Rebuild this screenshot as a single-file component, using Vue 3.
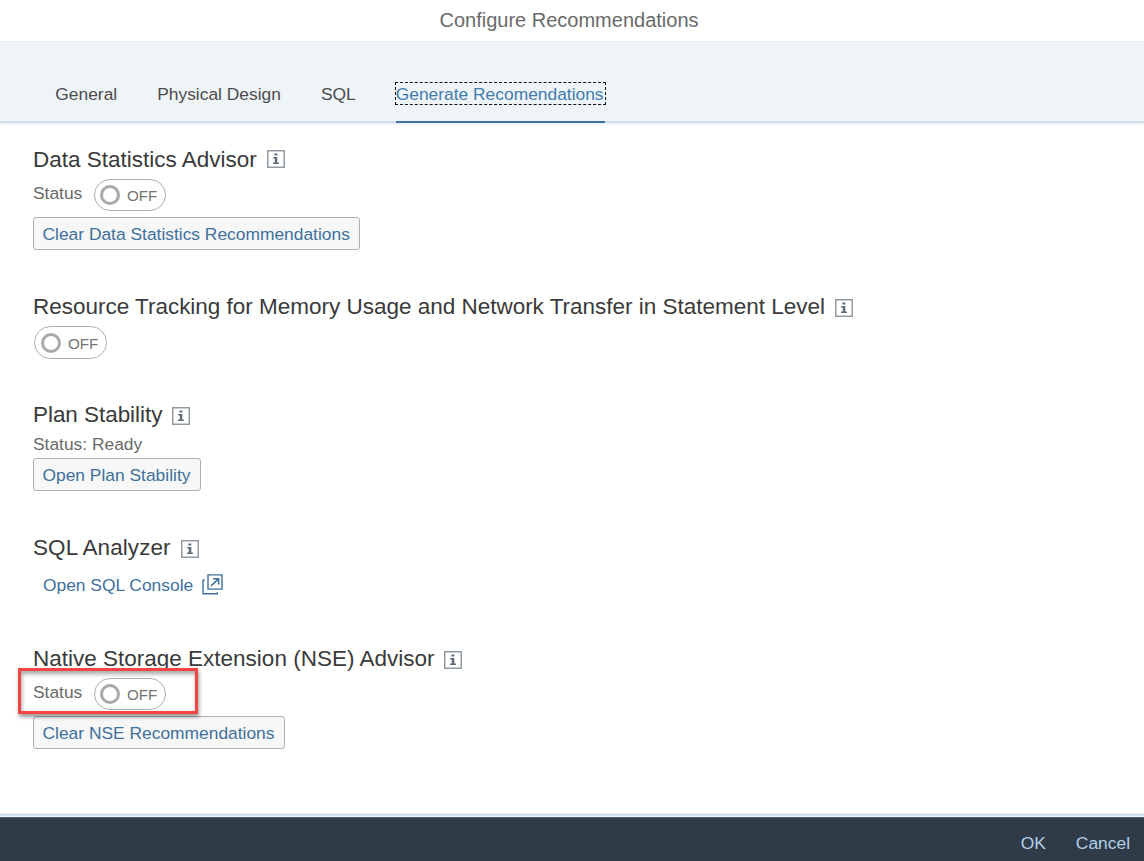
<script setup>
const tabs = [
  { label: 'General' },
  { label: 'Physical Design' },
  { label: 'SQL' },
  { label: 'Generate Recomendations', active: true },
]

const sections = [
  { id: 'stats', title: 'Data Statistics Advisor', label: 'Status', toggle: true, button: 'Clear Data Statistics Recommendations' },
  { id: 'tracking', title: 'Resource Tracking for Memory Usage and Network Transfer in Statement Level', toggle: true },
  { id: 'plan', title: 'Plan Stability', text: 'Status: Ready', button: 'Open Plan Stability' },
  { id: 'sql', title: 'SQL Analyzer', link: 'Open SQL Console' },
  { id: 'nse', title: 'Native Storage Extension (NSE) Advisor', label: 'Status', toggle: true, button: 'Clear NSE Recommendations', marked: true },
]
</script>

<template>
  <div class="dialog">
    <header class="title">Configure Recommendations</header>
    <nav class="tabs">
      <div v-for="t in tabs" :key="t.label" class="tab" :class="{ active: t.active }">
        <span class="tab-text">{{ t.label }}</span>
      </div>
    </nav>
    <main class="content">
      <section v-for="s in sections" :key="s.id" class="section" :class="s.id">
        <h2 class="heading">
          <span>{{ s.title }}</span>
          <svg class="info" viewBox="0 0 18 18" width="18" height="18">
            <rect x="0.75" y="0.75" width="16.5" height="16.5" fill="none" stroke="#8b959d" stroke-width="1.4" />
            <path d="M7.4 3.4h2.9v2.1H7.4zM6.2 6.9h4.1v5.6h1.6v1.6H6v-1.6h1.8V8.4H6.2z" fill="#5f6c77" />
          </svg>
        </h2>
        <div v-if="s.toggle" class="row">
          <span v-if="s.label" class="label">{{ s.label }}</span>
          <span class="switch"><span class="knob"></span><span class="off">OFF</span></span>
          <span v-if="s.marked" class="marker"></span>
        </div>
        <div v-if="s.text" class="status">{{ s.text }}</div>
        <button v-if="s.button" class="button">{{ s.button }}</button>
        <div v-if="s.link" class="link">
          <span>{{ s.link }}</span>
          <svg class="external" viewBox="0 0 21 21" width="21" height="21" fill="none" stroke="#40709c" stroke-width="1.4">
            <path d="M6 0.9h14v14.2H6z" />
            <path d="M3 6.1H1v13.7h14.3v-1.6" />
            <path d="M9 12l7.3-7.1M11 4.7h5.6v5.7" stroke-width="1.6" />
          </svg>
        </div>
      </section>
    </main>
    <footer class="footer">
      <span>OK</span>
      <span>Cancel</span>
    </footer>
  </div>
</template>

<style>
body {
  margin: 0;
  background: #fff;
}
</style>

<style scoped>
.dialog {
  width: 1144px;
  height: 861px;
  display: flex;
  flex-direction: column;
  overflow: hidden;
  background: #fff;
  font-family: "Liberation Sans", Arial, sans-serif;
  font-size: 17.4px;
  color: #6a6a6a;
}
.title {
  box-sizing: border-box;
  height: 42px;
  padding-right: 6px;
  text-align: center;
  font-size: 20px;
  line-height: 40px;
  border-bottom: 1px solid #eceff1;
}
.tabs {
  box-sizing: border-box;
  height: 81px;
  padding-left: 55.3px;
  display: flex;
  gap: 40px;
  background: #eff4f8;
  border-bottom: 2px solid #cfdfed;
  box-shadow: 0 1px 2px #e3ecf4;
  color: #4c4c4c;
}
.tab {
  box-sizing: border-box;
  height: 81px;
  padding-top: 41px;
  white-space: nowrap;
}
.tab-text {
  display: block;
  padding-top: 2px;
  line-height: 19px;
}
.tab.active {
  color: #427cac;
  border-bottom: 2px solid #40709c;
}
.tab.active .tab-text {
  padding-right: 1px;
  margin-right: -1px;
  outline: 1px dashed #111;
  outline-offset: 0;
}
.tab.active {
  padding-right: 1px;
}
.content {
  flex: 1;
  padding: 22px 33px 0 33px;
}
.section {
  display: flex;
  flex-direction: column;
  align-items: flex-start;
}
.heading {
  margin: 0;
  height: 28px;
  display: flex;
  gap: 10px;
  font-size: 22.5px;
  font-weight: 400;
  line-height: 30px;
  color: #3a3a3a;
  white-space: nowrap;
}
.info {
  margin-top: 7px;
}
.stats .info {
  margin-top: 5px;
}
.plan .info {
  margin-top: 6.5px;
}
.row {
  position: relative;
  display: flex;
  height: 32px;
  margin-top: 6px;
}
.label {
  line-height: 29px;
  width: 61px;
}
.switch {
  box-sizing: border-box;
  width: 72px;
  height: 32px;
  padding-left: 5px;
  display: flex;
  align-items: center;
  border: 1px solid #b0b0b0;
  border-radius: 16px;
}
.knob {
  box-sizing: border-box;
  width: 20px;
  height: 20px;
  border: 3px solid #a9a9a9;
  border-radius: 50%;
}
.off {
  margin-left: 7px;
  padding-top: 1px;
  font-size: 15.2px;
  color: #747474;
}
.button {
  box-sizing: border-box;
  height: 33px;
  margin: 6px 0 0;
  padding: 1px 9.5px 0 8.5px;
  font: inherit;
  color: #40709c;
  background: #f7f7f7;
  border: 1px solid #b0b0b0;
  border-radius: 3px;
  white-space: nowrap;
}
.tracking {
  margin-top: 42px;
}
.tracking .heading {
  letter-spacing: -0.013px;
}
.tracking .switch {
  width: 73px;
  height: 33px;
  margin-left: 1px;
  padding-left: 6px;
  border-radius: 17px;
}
.plan {
  margin-top: 42px;
}
.plan .heading {
  letter-spacing: -0.05px;
}
.status {
  margin-top: 4px;
  line-height: 24px;
}
.plan .button {
  margin-top: 2px;
}
.sql {
  margin-top: 42px;
}
.sql .heading {
  letter-spacing: 0.08px;
}
.link {
  display: flex;
  height: 24px;
  margin: 12px 0 0 10px;
  gap: 9px;
  line-height: 24px;
  color: #40709c;
}
.external {
  margin-top: 1px;
}
.nse {
  margin-top: 47px;
}
.marker {
  position: absolute;
  box-sizing: border-box;
  left: -15px;
  top: -10px;
  width: 180px;
  height: 46px;
  border: 3px solid #f44444;
  box-shadow: 1px 3px 4px rgba(0, 0, 0, 0.4), inset 1px 3px 4px rgba(0, 0, 0, 0.35);
}
.footer {
  box-sizing: border-box;
  height: 48px;
  padding: 4px 14px 0 0;
  display: flex;
  justify-content: flex-end;
  gap: 30px;
  line-height: 50px;
  color: #b3d0e8;
  border-top: 1px solid #e8eff6;
  background: linear-gradient(#cfdfed 2px, #f7fafc 2px, #f7fafc 3px, #52657a 3px, #2f3c48 5px);
}
</style>
